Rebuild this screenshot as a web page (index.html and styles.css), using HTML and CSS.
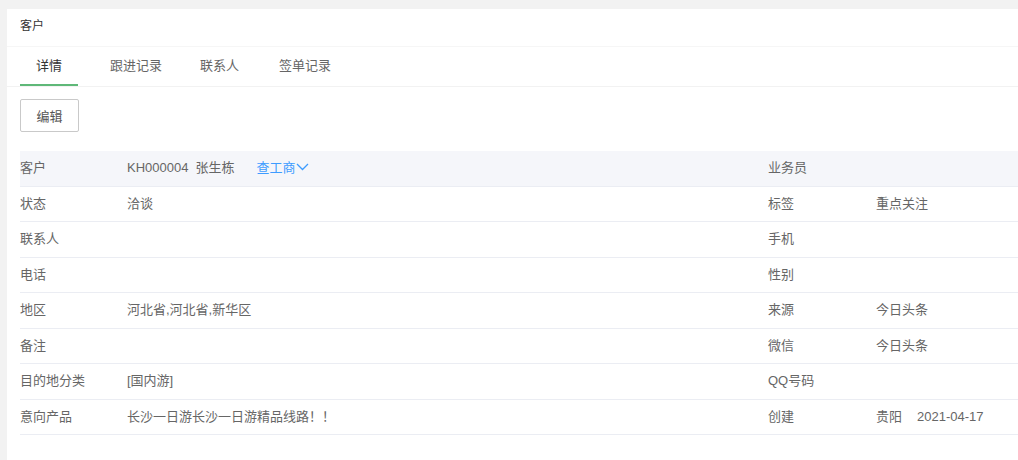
FILE: index.html
```html
<!DOCTYPE html>
<html lang="zh-CN">

<head>
    <meta charset="UTF-8">
    <meta name="viewport" content="width=device-width, initial-scale=1.0">
    <title>客户详情</title>
    <link rel="stylesheet" href="styles.css">
</head>

<body>
    <div class="panel">
        <div class="panel-head">客户</div>

        <div class="tabs">
            <div class="tab active">详情</div>
            <div class="tab">跟进记录</div>
            <div class="tab">联系人</div>
            <div class="tab">签单记录</div>
        </div>

        <div class="content">
            <button class="btn">编辑</button>

            <div class="detail">
                <div class="row first">
                    <div class="label">客户</div>
                    <div class="value">
                        <span>KH000004</span><span class="name">张生栋</span><a class="link" href="#">查工商<svg class="chevron" width="13" height="8" viewBox="0 0 13 8"><polyline points="1,1 6.5,6.5 12,1" fill="none" stroke="#3e9cff" stroke-width="1.3"/></svg></a>
                    </div>
                    <div class="label">业务员</div>
                    <div class="value"></div>
                </div>
                <div class="row">
                    <div class="label">状态</div>
                    <div class="value">洽谈</div>
                    <div class="label">标签</div>
                    <div class="value">重点关注</div>
                </div>
                <div class="row">
                    <div class="label">联系人</div>
                    <div class="value"></div>
                    <div class="label">手机</div>
                    <div class="value"></div>
                </div>
                <div class="row">
                    <div class="label">电话</div>
                    <div class="value"></div>
                    <div class="label">性别</div>
                    <div class="value"></div>
                </div>
                <div class="row">
                    <div class="label">地区</div>
                    <div class="value">河北省,河北省,新华区</div>
                    <div class="label">来源</div>
                    <div class="value">今日头条</div>
                </div>
                <div class="row">
                    <div class="label">备注</div>
                    <div class="value"></div>
                    <div class="label">微信</div>
                    <div class="value">今日头条</div>
                </div>
                <div class="row">
                    <div class="label">目的地分类</div>
                    <div class="value">[国内游]</div>
                    <div class="label">QQ号码</div>
                    <div class="value"></div>
                </div>
                <div class="row">
                    <div class="label">意向产品</div>
                    <div class="value">长沙一日游长沙一日游精品线路！！</div>
                    <div class="label">创建</div>
                    <div class="value"><span>贵阳</span><span class="date">2021-04-17</span></div>
                </div>
            </div>
        </div>
    </div>
</body>

</html>
```

FILE: styles.css
```css
body {
    font-family: "Liberation Sans", "Noto Sans CJK SC", sans-serif;
    font-size: 13px;
    color: #666;
    margin: 0;
    padding: 9px 0 0 7px;
    background-color: #f2f2f2;
    overflow: hidden;
}

.panel {
    background: #fff;
    min-height: 460px;
}

.panel-head {
    height: 37px;
    line-height: 35px;
    padding-left: 13px;
    font-size: 12px;
    color: #333;
    border-bottom: 1px solid #f6f6f6;
}

.tabs {
    display: flex;
    height: 39px;
    padding-left: 13px;
    border-bottom: 1px solid #f2f2f2;
}

.tab {
    padding: 0 19px;
    line-height: 37px;
    color: #666;
    cursor: pointer;
}

.tab.active {
    padding: 0 16px;
    margin-right: 13px;
    color: #333;
    border-bottom: 2px solid #5fb878;
}

.tab:last-child {
    margin-left: 2px;
}

.content {
    padding: 12px 0 0 13px;
}

.btn {
    width: 59px;
    height: 33px;
    font-family: inherit;
    font-size: 13px;
    color: #555;
    background: #fff;
    border: 1px solid #c9c9c9;
    border-radius: 2px;
    cursor: pointer;
}

.detail {
    margin-top: 19px;
}

.row {
    display: grid;
    grid-template-columns: 107px 641px 108px 1fr;
    align-items: center;
    height: 35.5px;
    box-sizing: border-box;
    border-bottom: 1px solid #ebedf3;
}

.row.first {
    background-color: #f5f6fa;
}

.label,
.value {
    line-height: 18px;
    white-space: nowrap;
}

.name {
    margin-left: 7px;
}

.link {
    margin-left: 22px;
    color: #3e9cff;
    text-decoration: none;
}

.chevron {
    margin-left: 1px;
    vertical-align: 1px;
}

.date {
    margin-left: 15px;
}
```
